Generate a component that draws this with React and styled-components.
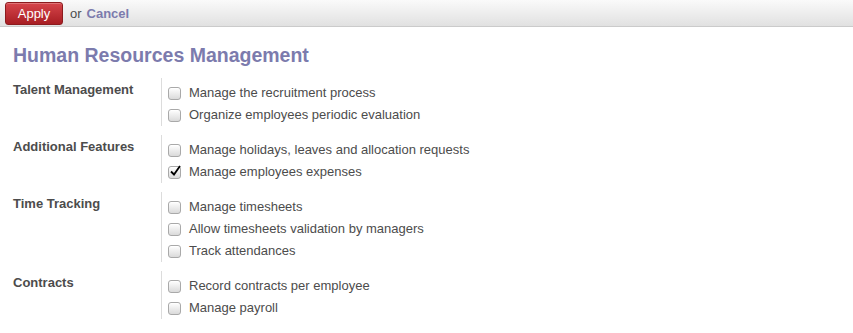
import React from 'react'
import styled, { createGlobalStyle } from 'styled-components'

const Global = createGlobalStyle`
  body {
    margin: 0;
    background: #fff;
    font-family: "Liberation Sans", Arial, sans-serif;
    font-size: 13px;
    color: #4c4c4c;
  }
`

const Toolbar = styled.div`
  height: 27px;
  box-sizing: border-box;
  display: flex;
  align-items: center;
  padding: 0 5px;
  background: linear-gradient(#fafafa, #e1e1e1);
  border-bottom: 1px solid #cbcbcb;
`

const ApplyButton = styled.button`
  height: 23px;
  width: 58px;
  margin-top: 1px;
  padding: 0;
  border: 1px solid #8c1b1e;
  border-radius: 3px;
  background: linear-gradient(#d6454b, #a81e23);
  color: #fff;
  font-family: inherit;
  font-size: 13px;
  box-shadow: inset 0 1px 0 rgba(255, 255, 255, 0.25);
`

const Or = styled.span`
  margin-left: 7px;
  color: #4c4c4c;
`

const CancelLink = styled.a`
  margin-left: 5px;
  color: #7c7bad;
  font-weight: bold;
  text-decoration: none;
`

const Sheet = styled.div`
  padding: 14px 13px 0;
`

const Title = styled.h1`
  margin: 0 0 9px;
  font-size: 19.5px;
  line-height: 28px;
  font-weight: bold;
  color: #7c7bad;
`

const Group = styled.div`
  display: flex;
  margin-bottom: 9px;
`

const Label = styled.div`
  width: 148px;
  flex-shrink: 0;
  padding-top: 4px;
  font-weight: bold;
  line-height: 16px;
`

const Options = styled.div`
  border-left: 1px solid #dcdcdc;
  padding: 4px 0 0 6px;
`

const Option = styled.label`
  display: flex;
  align-items: center;
  height: 22px;
  line-height: 22px;
  color: #4c4c4c;
`

const Box = styled.span`
  width: 11px;
  height: 11px;
  margin-right: 8px;
  border: 1px solid #a9a9a9;
  border-radius: 3px;
  background: linear-gradient(#ffffff, #dadada);
  box-shadow: inset 0 1px 0 #fff;
  position: relative;
  flex-shrink: 0;
`

const Check = styled.svg`
  position: absolute;
  left: 0px;
  top: -3px;
`

const groups = [
  {
    label: 'Talent Management',
    items: [
      ['Manage the recruitment process', false],
      ['Organize employees periodic evaluation', false],
    ],
  },
  {
    label: 'Additional Features',
    items: [
      ['Manage holidays, leaves and allocation requests', false],
      ['Manage employees expenses', true],
    ],
  },
  {
    label: 'Time Tracking',
    items: [
      ['Manage timesheets', false],
      ['Allow timesheets validation by managers', false],
      ['Track attendances', false],
    ],
  },
  {
    label: 'Contracts',
    items: [
      ['Record contracts per employee', false],
      ['Manage payroll', false],
    ],
  },
]

const Checkbox = ({ checked }) => (
  <Box>
    {checked && (
      <Check width="13" height="13" viewBox="0 0 13 13">
        <path d="M2 7.5 L5 10.5 L11 2" fill="none" stroke="#000" strokeWidth="1.8" />
      </Check>
    )}
  </Box>
)

export default function App() {
  return (
    <>
      <Global />
      <Toolbar>
        <ApplyButton>Apply</ApplyButton>
        <Or>or</Or>
        <CancelLink href="#">Cancel</CancelLink>
      </Toolbar>
      <Sheet>
        <Title>Human Resources Management</Title>
        {groups.map((g) => (
          <Group key={g.label}>
            <Label>{g.label}</Label>
            <Options>
              {g.items.map(([text, checked]) => (
                <Option key={text}>
                  <Checkbox checked={checked} />
                  {text}
                </Option>
              ))}
            </Options>
          </Group>
        ))}
      </Sheet>
    </>
  )
}
